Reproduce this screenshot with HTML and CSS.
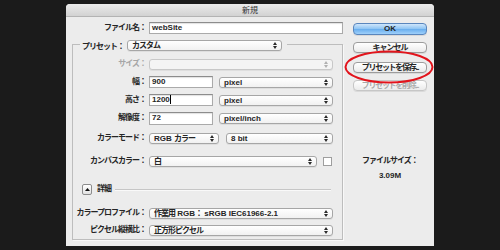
FILE: index.html
```html
<!DOCTYPE html>
<html lang="ja">
<head>
<meta charset="utf-8">
<title>新規</title>
<link rel="stylesheet" href="styles.css">
</head>
<body>
<div class="dialog">
  <div class="titlebar">新規</div>
  <div class="content">
    <div class="left">
      <div class="row r-file"><span class="lbl lbl-file">ファイル名：</span><span class="input w-file">webSite</span></div>
      <div class="group">
        <div class="preset"><span class="plbl">プリセット：</span><span class="select w-preset"><span class="jp">カスタム</span><svg class="arr" viewBox="0 0 4 7"><polygon points="0,3 2,0 4,3"/><polygon points="0,4 2,7 4,4"/></svg></span></div>
        <div class="row r-size"><span class="lbl dis">サイズ：</span><span class="select dis w-full"><span></span><svg class="arr" viewBox="0 0 4 7"><polygon points="0,3 2,0 4,3"/><polygon points="0,4 2,7 4,4"/></svg></span></div>
        <div class="row r-w"><span class="lbl">幅：</span><span class="input w-num">900</span><span class="select w-unit">pixel<svg class="arr" viewBox="0 0 4 7"><polygon points="0,3 2,0 4,3"/><polygon points="0,4 2,7 4,4"/></svg></span></div>
        <div class="row r-h"><span class="lbl">高さ：</span><span class="input w-num"><span class="caret">1200</span></span><span class="select w-unit">pixel<svg class="arr" viewBox="0 0 4 7"><polygon points="0,3 2,0 4,3"/><polygon points="0,4 2,7 4,4"/></svg></span></div>
        <div class="row r-res"><span class="lbl">解像度：</span><span class="input w-num">72</span><span class="select w-unit">pixel/inch<svg class="arr" viewBox="0 0 4 7"><polygon points="0,3 2,0 4,3"/><polygon points="0,4 2,7 4,4"/></svg></span></div>
        <div class="row r-mode"><span class="lbl">カラーモード：</span><span class="select w-mode"><span>RGB <span class="jp">カラー</span></span><svg class="arr" viewBox="0 0 4 7"><polygon points="0,3 2,0 4,3"/><polygon points="0,4 2,7 4,4"/></svg></span><span class="select w-bit">8 bit<svg class="arr" viewBox="0 0 4 7"><polygon points="0,3 2,0 4,3"/><polygon points="0,4 2,7 4,4"/></svg></span></div>
        <div class="row r-canvas"><span class="lbl">カンバスカラー：</span><span class="select w-canvas"><span class="jp">白</span><svg class="arr" viewBox="0 0 4 7"><polygon points="0,3 2,0 4,3"/><polygon points="0,4 2,7 4,4"/></svg></span><span class="check"></span></div>
        <div class="row r-detail"><span class="disc"><svg viewBox="0 0 5 3"><polygon points="0,3 2.5,0 5,3"/></svg></span><span class="dlbl">詳細</span><span class="dline"></span></div>
        <div class="row r-prof"><span class="lbl">カラープロファイル：</span><span class="select w-full"><span><span class="jp">作業用</span> RGB<span class="jp">：</span> sRGB IEC61966-2.1</span><svg class="arr" viewBox="0 0 4 7"><polygon points="0,3 2,0 4,3"/><polygon points="0,4 2,7 4,4"/></svg></span></div>
        <div class="row r-pix"><span class="lbl">ピクセル縦横比：</span><span class="select w-full"><span class="jp">正方形ピクセル</span><svg class="arr" viewBox="0 0 4 7"><polygon points="0,3 2,0 4,3"/><polygon points="0,4 2,7 4,4"/></svg></span></div>
      </div>
    </div>
    <div class="right">
      <div class="btn ok">OK</div>
      <div class="btn b-cancel jp">キャンセル</div>
      <div class="btn b-save btxt">プリセットを保存...</div>
      <div class="btn b-del dis btxt">プリセットを削除...</div>
      <div class="fsize jp">ファイルサイズ：</div>
      <div class="fval">3.09M</div>
    </div>
  </div>
  <svg class="mark" viewBox="0 0 90 34"><ellipse cx="45" cy="17" rx="43.5" ry="15.5"/></svg>
</div>
</body>
</html>
```

FILE: styles.css
```css
* { box-sizing: border-box; margin: 0; padding: 0; }
html, body { width: 500px; height: 250px; overflow: hidden; }
body {
  background: #1b1b1b;
  font-family: "Liberation Sans", "Noto Sans CJK JP", sans-serif;
  font-size: 8px;
  font-weight: 700;
  color: #252525;
  padding: 4px 0 0 66px;
}
.jp { letter-spacing: -1px; }
.btxt { letter-spacing: -1.3px; }
.dialog {
  position: relative;
  width: 368px;
  height: 242px;
  background: #ececec;
  border-radius: 4px 4px 0 0;
  overflow: hidden;
}
.titlebar {
  height: 13px;
  background: linear-gradient(#ebebeb, #d2d2d2);
  border-bottom: 1px solid #b3b3b3;
  text-align: center;
  font-family: "Noto Sans CJK JP", sans-serif;
  font-weight: 400;
  font-size: 8px;
  line-height: 12px;
  color: #333;
}
.content { display: flex; padding: 0 7px 0 6px; gap: 10px; }
.left { width: 271px; display: flex; flex-direction: column; }
.row { display: flex; align-items: center; height: 12px; line-height: 12px; }
.lbl {
  width: 76px;
  flex: none;
  text-align: right;
  padding-right: 3px;
  letter-spacing: -1px;
  white-space: nowrap;
}
.lbl-file { width: 77px; }
.dis { color: #a6a6a6; }
.r-file { margin-top: 5px; }
.input {
  height: 12px;
  background: #fff;
  border: 1px solid #aaa;
  border-top-color: #8c8c8c;
  box-shadow: inset 0 1px 1px rgba(0,0,0,.12);
  padding-left: 2px;
  line-height: 10px;
  font-weight: 700;
  flex: none;
}
.w-file { width: 194px; }
.w-num { width: 64px; }
.caret { border-right: 1px solid #000; }
.select {
  height: 11px;
  flex: none;
  border: 1px solid #a6a6a6;
  border-radius: 3px;
  background: linear-gradient(#ffffff, #f1f1f1);
  box-shadow: 0 1px 0 rgba(0,0,0,.06);
  display: flex;
  align-items: center;
  justify-content: space-between;
  padding: 0 4px;
  line-height: 9px;
  white-space: nowrap;
}
.select.dis { border-color: #c8c8c8; background: #f4f4f4; }
.arr { width: 4px; height: 7px; fill: #2a2a2a; flex: none; }
.select.dis .arr { fill: #b0b0b0; }
.w-preset { width: 155px; }
.w-full { width: 184px; }
.w-unit { width: 114px; margin-left: 6px; }
.w-mode { width: 70px; }
.w-bit { width: 107px; margin-left: 7px; }
.w-canvas { width: 168px; }
.check {
  width: 9px; height: 9px;
  margin-left: 6px;
  background: #fff;
  border: 1px solid #9e9e9e;
  flex: none;
}
.group {
  margin-top: 10px;
  border: 1px solid #bdbdbd;
  box-shadow: 1px 1px 0 #f8f8f8;
  padding: 0 9px 3px 0;
  display: flex;
  flex-direction: column;
}
.preset {
  display: flex;
  align-items: center;
  align-self: flex-start;
  height: 12px;
  margin: -6px 0 0 7px;
  padding: 0 5px 0 2px;
  background: #ececec;
}
.plbl { width: 45px; letter-spacing: -1px; white-space: nowrap; }
.r-size { margin-top: 7px; }
.r-w, .r-h, .r-res { margin-top: 6px; }
.r-res .input { height: 13px; }
.r-mode { margin-top: 8px; }
.r-canvas { margin-top: 11px; }
.r-detail { margin-top: 16px; }
.r-prof { margin-top: 12px; }
.r-pix { margin-top: 5px; }
.disc {
  width: 10px; height: 11px;
  margin-left: 9px;
  border: 1px solid #8c8c8c;
  border-radius: 2px;
  background: linear-gradient(#fff, #e2e2e2);
  display: flex; align-items: center; justify-content: center;
  flex: none;
}
.disc svg { width: 5px; height: 3px; fill: #111; }
.dlbl { margin-left: 5px; letter-spacing: -1px; }
.dline {
  flex: 1;
  height: 1px;
  margin: 0 2px 0 4px;
  background: #c6c6c6;
  box-shadow: 0 1px 0 #f9f9f9;
}
.right { width: 74px; display: flex; flex-direction: column; flex: none; }
.btn {
  height: 11px;
  border: 1px solid #9c9c9c;
  border-radius: 4px;
  background: linear-gradient(#ffffff, #ebebeb);
  box-shadow: 0 1px 0 rgba(0,0,0,.08);
  text-align: center;
  line-height: 9px;
  white-space: nowrap;
  overflow: hidden;
}
.ok {
  height: 12px;
  margin-top: 6px;
  line-height: 10px;
  border-color: #5a86bd;
  background: linear-gradient(#cfe6fb, #8cc3f3 50%, #6cb0ef 55%, #9fd0fa);
}
.b-cancel { margin-top: 7px; }
.b-save { margin-top: 9px; }
.b-del { margin-top: 7px; border-color: #c6c6c6; color: #a9a9a9; }
.fsize { margin-top: 65px; text-align: center; line-height: 10px; }
.fval { margin-top: 5px; text-align: center; line-height: 10px; }
.mark {
  position: absolute;
  left: 278px;
  top: 46px;
  width: 90px;
  height: 34px;
  fill: none;
  stroke: #e2141c;
  stroke-width: 2;
}
```
